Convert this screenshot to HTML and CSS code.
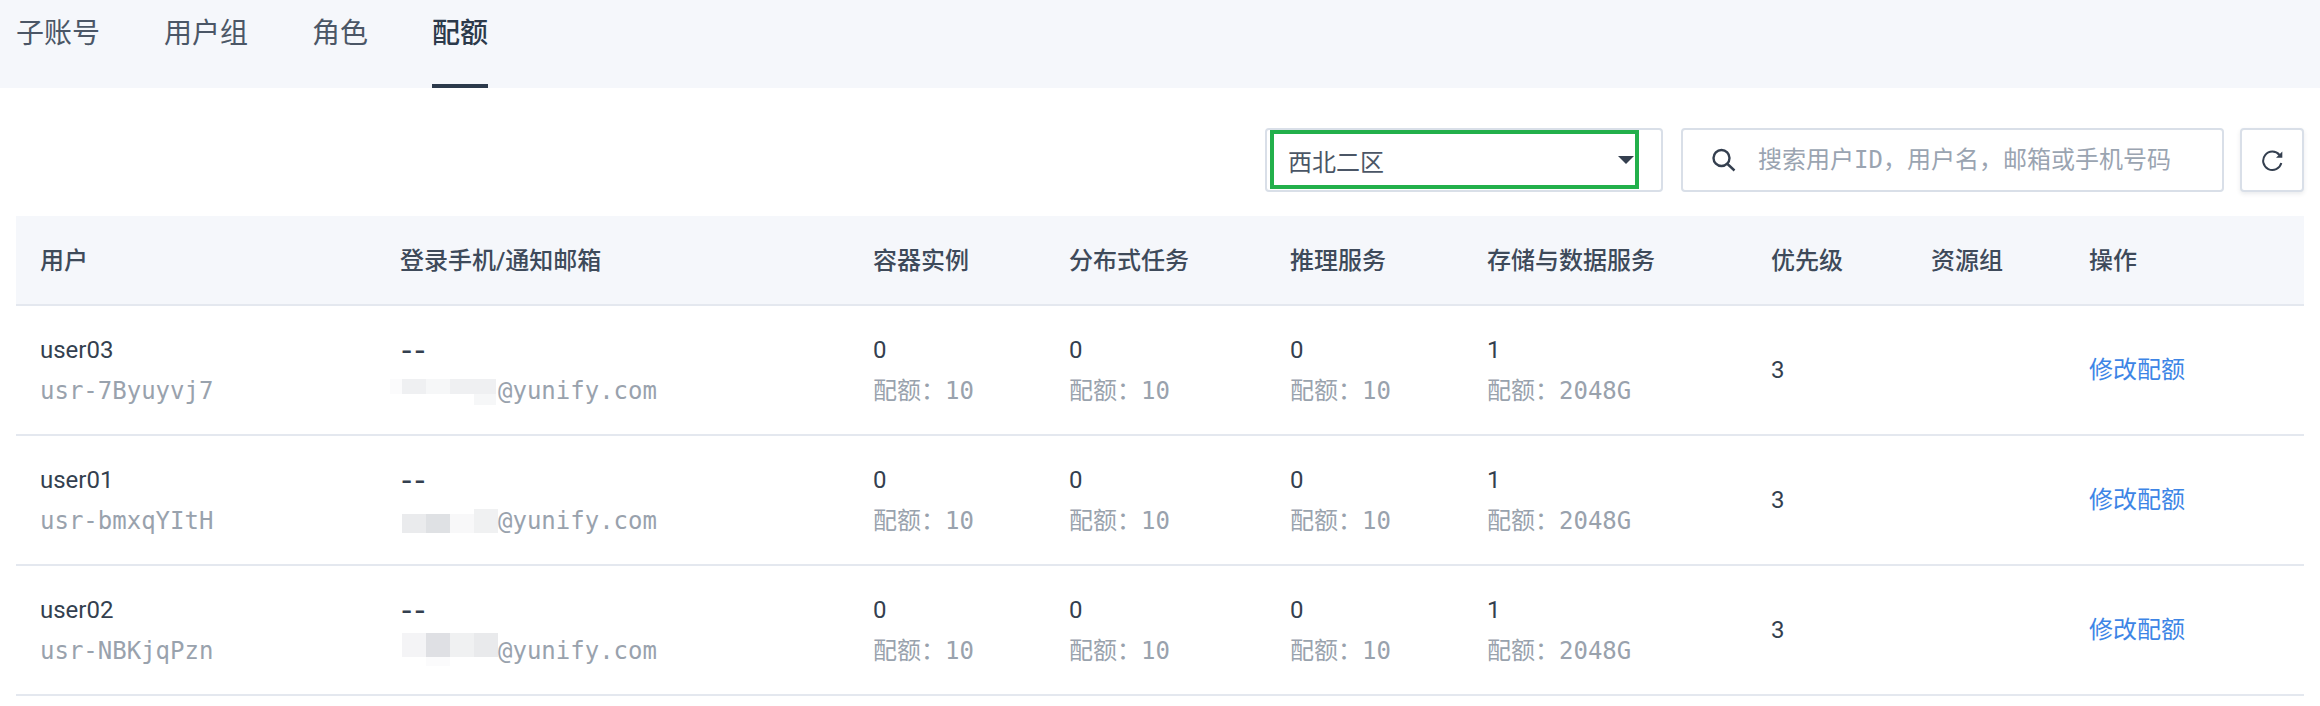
FILE: index.html
```html
<!DOCTYPE html>
<html lang="zh-CN">
<head>
    <meta charset="UTF-8">
    <title>配额</title>
    <link rel="stylesheet" href="styles.css">
</head>
<body>

<div class="tabs">
    <a class="tab">子账号</a>
    <a class="tab">用户组</a>
    <a class="tab">角色</a>
    <a class="tab active">配额</a>
</div>

<div class="toolbar">
    <div class="zone">
        <span>西北二区</span>
        <i class="caret"></i>
        <div class="mark"></div>
    </div>
    <div class="search">
        <svg class="search-icon" width="24" height="24" viewBox="0 0 24 24"><circle cx="9.5" cy="10" r="8"/><path d="M15.5 16L22.5 22.5"/></svg>
        <input type="text" placeholder="搜索用户ID，用户名，邮箱或手机号码">
    </div>
    <button class="refresh">
        <svg width="24" height="24" viewBox="0 0 24 24"><path d="M19.5 7A9.2 9.2 0 1 0 21.3 15"/><path class="tip" d="M22.3 3.5V9.8H16Z"/></svg>
    </button>
</div>

<table>
    <colgroup>
        <col class="c1"><col class="c2"><col class="c3"><col class="c4"><col class="c5">
        <col class="c6"><col class="c7"><col class="c8"><col class="c9">
    </colgroup>
    <thead>
        <tr>
            <th>用户</th>
            <th>登录手机/通知邮箱</th>
            <th>容器实例</th>
            <th>分布式任务</th>
            <th>推理服务</th>
            <th>存储与数据服务</th>
            <th>优先级</th>
            <th>资源组</th>
            <th>操作</th>
        </tr>
    </thead>
    <tbody>
        <tr>
            <td><div class="main">user03</div><div class="sub">usr-7Byuyvj7</div></td>
            <td>
                <div class="main dashes">--</div>
                <div class="sub">
                    <svg class="mosaic" width="108" height="40" viewBox="0 0 108 40">
                        <rect x="0" y="9" width="12" height="15" fill="#fbfbfc"/>
                        <rect x="12" y="9" width="24" height="15" fill="#eff0f2"/>
                        <rect x="36" y="9" width="24" height="15" fill="#f6f7f8"/>
                        <rect x="60" y="9" width="46" height="15" fill="#eff0f2"/>
                        <rect x="84" y="24" width="22" height="11" fill="#f6f7f8"/>
                    </svg>@yunify.com
                </div>
            </td>
            <td><div class="main">0</div><div class="sub">配额：10</div></td>
            <td><div class="main">0</div><div class="sub">配额：10</div></td>
            <td><div class="main">0</div><div class="sub">配额：10</div></td>
            <td><div class="main">1</div><div class="sub">配额：2048G</div></td>
            <td>3</td>
            <td></td>
            <td><a class="link">修改配额</a></td>
        </tr>
        <tr>
            <td><div class="main">user01</div><div class="sub">usr-bmxqYItH</div></td>
            <td>
                <div class="main dashes">--</div>
                <div class="sub">
                    <svg class="mosaic" width="108" height="40" viewBox="0 0 108 40">
                        <rect x="12" y="14" width="24" height="19" fill="#eaebed"/>
                        <rect x="36" y="14" width="24" height="19" fill="#dfe1e4"/>
                        <rect x="60" y="14" width="24" height="19" fill="#f8f8f9"/>
                        <rect x="84" y="9" width="24" height="24" fill="#f0f1f2"/>
                    </svg>@yunify.com
                </div>
            </td>
            <td><div class="main">0</div><div class="sub">配额：10</div></td>
            <td><div class="main">0</div><div class="sub">配额：10</div></td>
            <td><div class="main">0</div><div class="sub">配额：10</div></td>
            <td><div class="main">1</div><div class="sub">配额：2048G</div></td>
            <td>3</td>
            <td></td>
            <td><a class="link">修改配额</a></td>
        </tr>
        <tr>
            <td><div class="main">user02</div><div class="sub">usr-NBKjqPzn</div></td>
            <td>
                <div class="main dashes">--</div>
                <div class="sub">
                    <svg class="mosaic" width="108" height="40" viewBox="0 0 108 40">
                        <rect x="12" y="3" width="24" height="24" fill="#f4f4f6"/>
                        <rect x="36" y="3" width="24" height="24" fill="#dfe0e4"/>
                        <rect x="60" y="3" width="24" height="24" fill="#f0f1f2"/>
                        <rect x="84" y="3" width="24" height="24" fill="#e9eaec"/>
                        <rect x="36" y="27" width="24" height="9" fill="#fbfbfc"/>
                    </svg>@yunify.com
                </div>
            </td>
            <td><div class="main">0</div><div class="sub">配额：10</div></td>
            <td><div class="main">0</div><div class="sub">配额：10</div></td>
            <td><div class="main">0</div><div class="sub">配额：10</div></td>
            <td><div class="main">1</div><div class="sub">配额：2048G</div></td>
            <td>3</td>
            <td></td>
            <td><a class="link">修改配额</a></td>
        </tr>
    </tbody>
</table>

</body>
</html>
```

FILE: styles.css
```css
body {
    margin: 0;
    background-color: #fff;
    color: #343f4f;
    font-family: Roboto, "Noto Sans CJK SC", sans-serif;
    font-size: 24px;
}

.tabs {
    display: flex;
    gap: 64px;
    height: 88px;
    padding-left: 16px;
    background-color: #f5f7fb;
}

.tab {
    height: 88px;
    box-sizing: border-box;
    font-size: 28px;
    line-height: 68px;
    color: #4b5666;
}

.tab.active {
    color: #2c3a4b;
    font-weight: 500;
    border-bottom: 4px solid #2c3a4b;
}

.toolbar {
    display: flex;
    justify-content: flex-end;
    padding: 40px 16px 24px;
}

.zone, .search, .refresh {
    box-sizing: border-box;
    height: 64px;
    background: #fff;
    border: 2px solid #d9dfe8;
    border-radius: 4px;
}

.zone {
    position: relative;
    display: flex;
    align-items: center;
    justify-content: space-between;
    width: 398px;
    padding: 0 27px 0 21px;
    color: #4b5666;
}

.caret {
    width: 0;
    height: 0;
    border-left: 8px solid transparent;
    border-right: 8px solid transparent;
    border-top: 8px solid #343f4f;
}

/* annotation box drawn over the select */
.mark {
    position: absolute;
    left: 3px;
    top: 0;
    width: 369px;
    height: 59px;
    box-sizing: border-box;
    border: 4px solid #22b04b;
}

.search {
    display: flex;
    align-items: center;
    width: 543px;
    margin-left: 18px;
    padding-left: 29px;
}

.search-icon {
    flex: none;
    fill: none;
    stroke: #343f4f;
    stroke-width: 2.4;
}

.search input {
    flex: 1;
    min-width: 0;
    margin-left: 22px;
    padding: 0;
    border: 0;
    outline: 0;
    color: #343f4f;
    font-family: "DejaVu Sans Mono", "Noto Sans CJK SC", monospace;
    font-size: 24px;
}

.search input::placeholder {
    color: #9aa4b1;
    opacity: 1;
}

.refresh {
    display: flex;
    align-items: center;
    justify-content: center;
    width: 64px;
    margin-left: 16px;
    padding: 0;
    box-shadow: 0 2px 4px rgba(52, 63, 79, 0.1);
}

.refresh svg {
    fill: none;
    stroke: #343f4f;
    stroke-width: 2;
}

.refresh .tip {
    fill: #343f4f;
    stroke: none;
}

table {
    width: 2288px;
    margin-left: 16px;
    border-collapse: collapse;
    table-layout: fixed;
}

.c1 { width: 360px; }
.c2 { width: 473px; }
.c3 { width: 196px; }
.c4 { width: 221px; }
.c5 { width: 197px; }
.c6 { width: 284px; }
.c7 { width: 160px; }
.c8 { width: 158px; }
.c9 { width: 239px; }

th {
    height: 85px;
    padding: 0 0 3px 24px;
    background-color: #f5f7fb;
    border-bottom: 2px solid #e4e8ef;
    color: #3e4a5a;
    font-weight: 500;
    text-align: left;
}

td {
    height: 128px;
    padding: 0 0 0 24px;
    border-bottom: 2px solid #e4e8ef;
    line-height: 40px;
    white-space: nowrap;
}

.sub {
    height: 40px;
    line-height: 42px;
    color: #99a2ad;
    font-family: "DejaVu Sans Mono", "Noto Sans CJK SC", monospace;
}

/* the two dashes sit almost touching in the original */
.dashes {
    height: 40px;
    margin-left: -3px;
    font-family: "DejaVu Sans Mono", monospace;
    font-size: 32px;
    letter-spacing: -6px;
}

.mosaic {
    display: inline-block;
    margin-left: -10px;
    vertical-align: top;
}

.link {
    color: #3d85e6;
}
```
